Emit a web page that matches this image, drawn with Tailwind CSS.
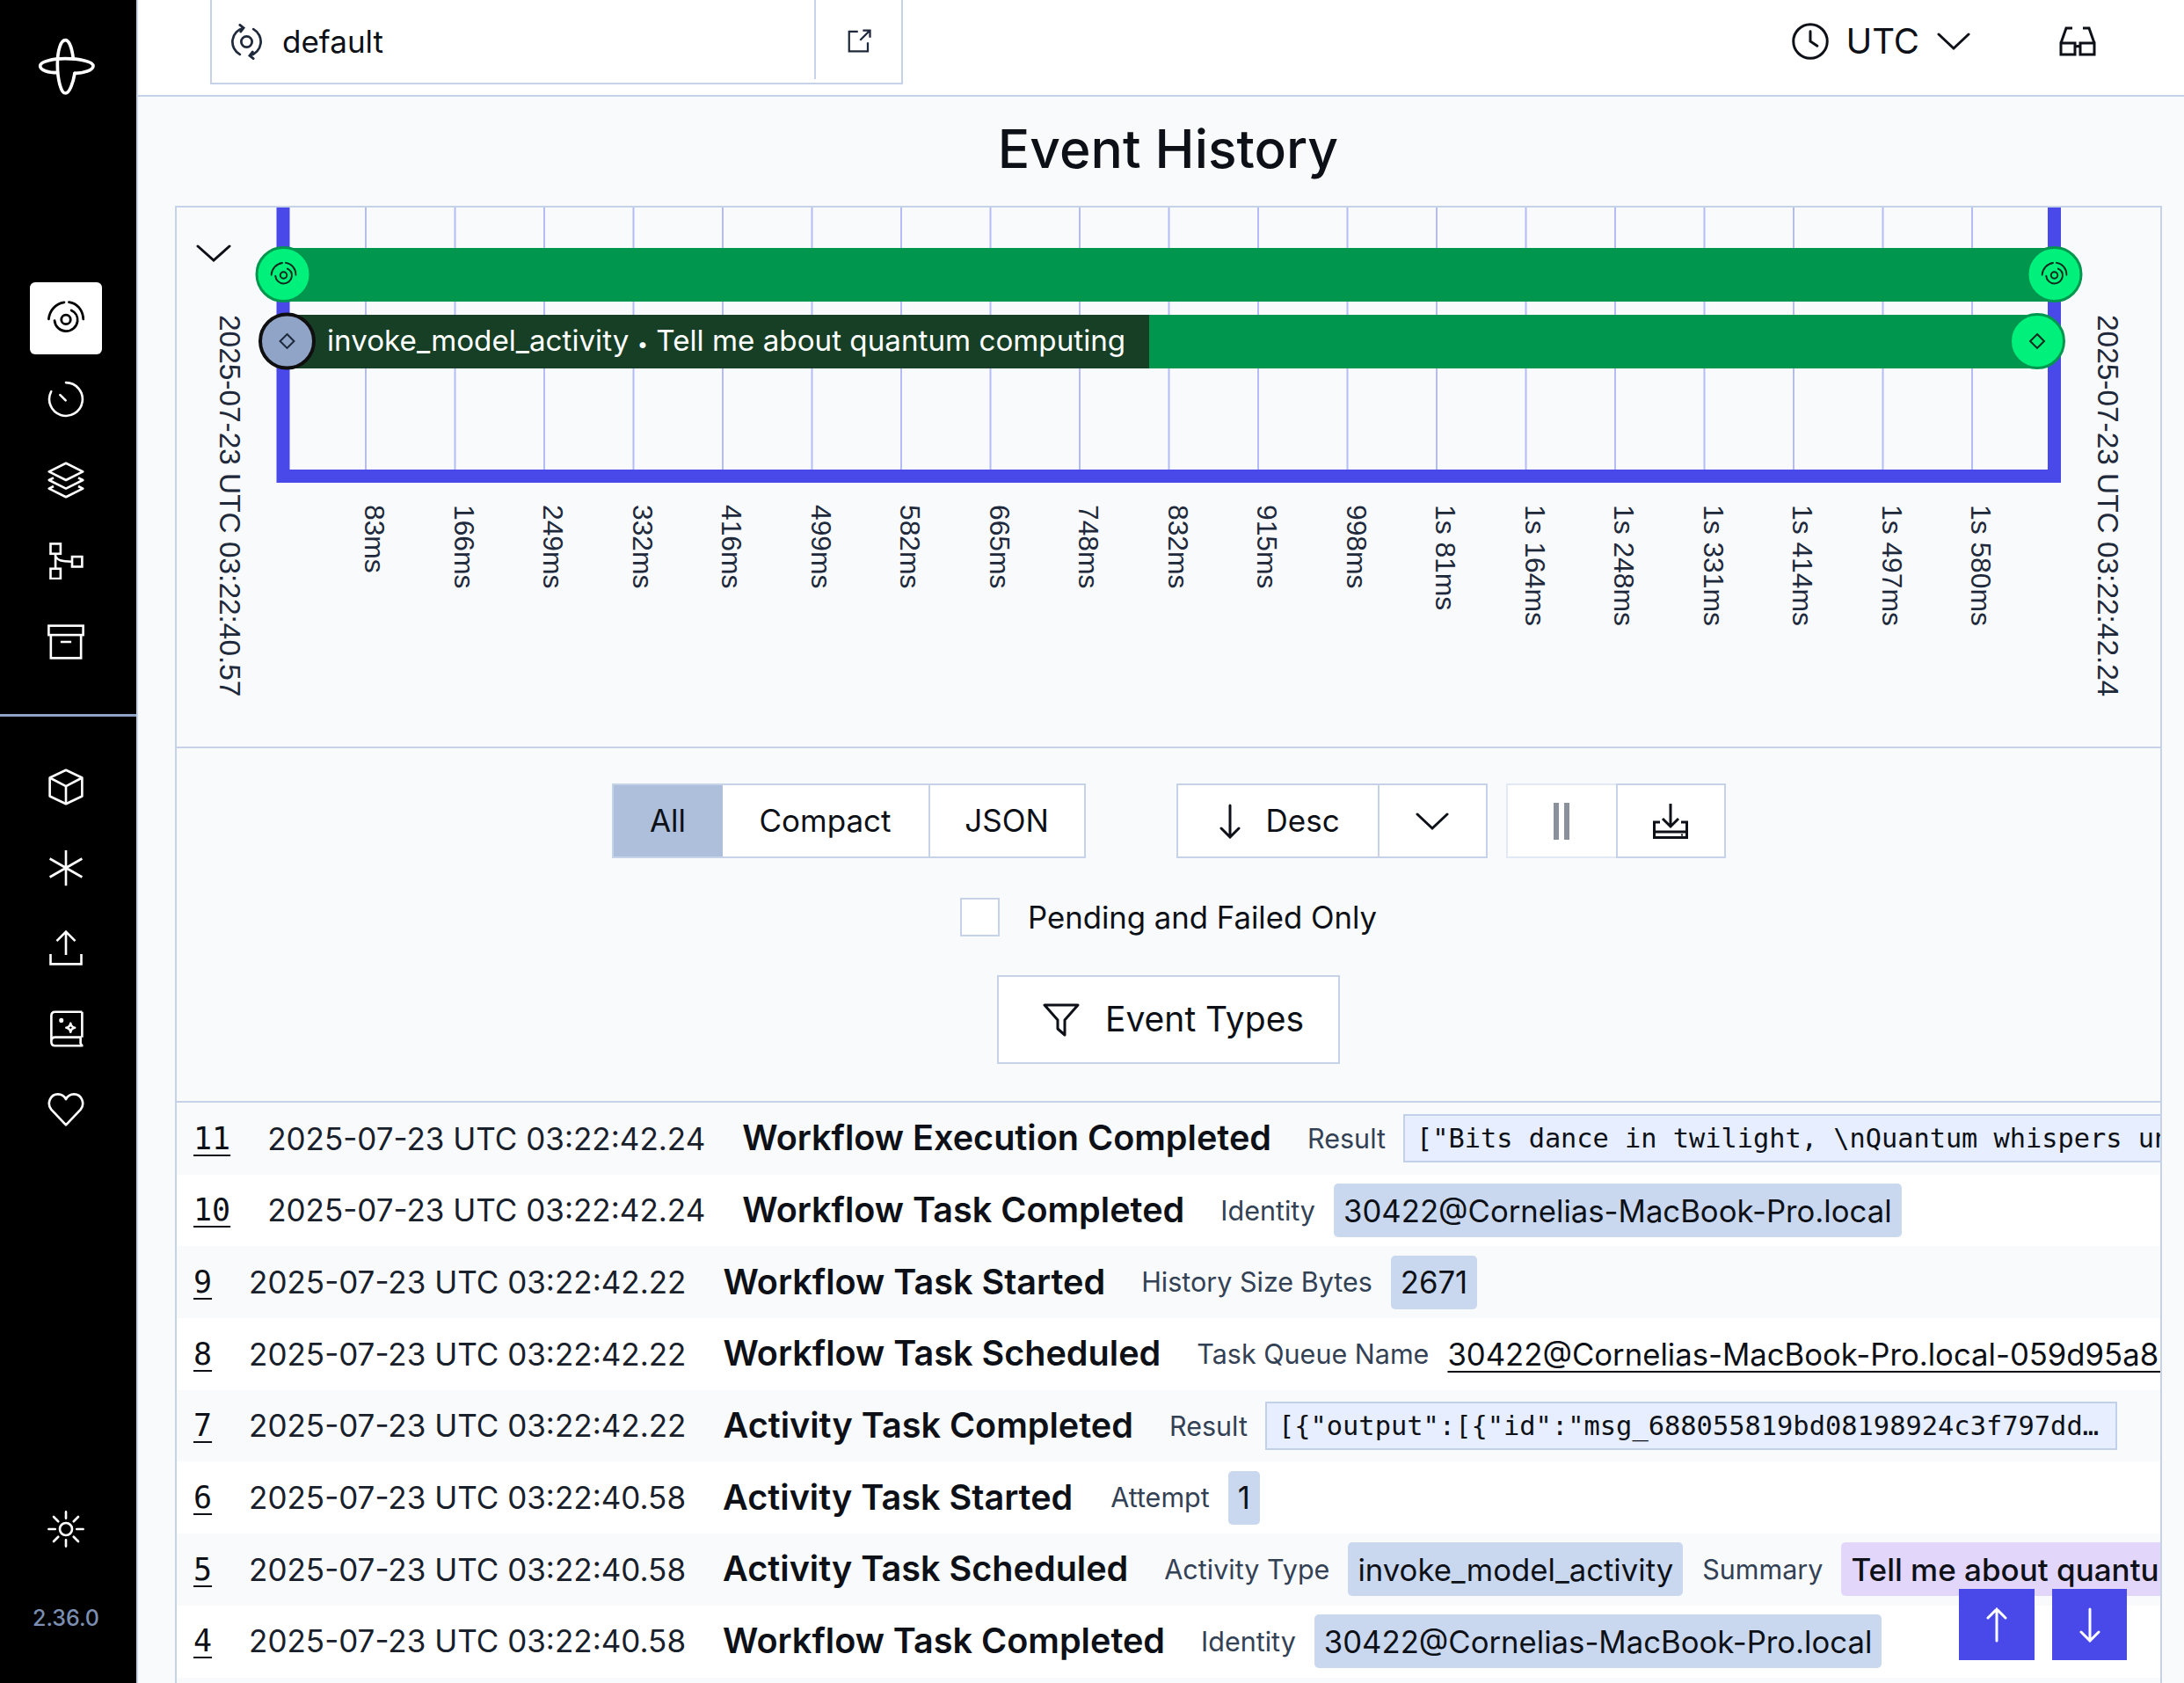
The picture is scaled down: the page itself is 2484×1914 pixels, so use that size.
<!DOCTYPE html>
<html lang="en">
<head>
<meta charset="UTF-8">
<title>Event History</title>
<script src="https://cdn.jsdelivr.net/npm/@tailwindcss/browser@4"></script>
</head>
<body class="w-[2484px] h-[1914px] overflow-hidden flex bg-[#f8fafc] text-[#0d1117] font-['Inter',sans-serif]">

<!-- icon sheet -->
<svg class="hidden">
  <symbol id="i-workflow" viewBox="0 0 24 24" fill="none" stroke="currentColor" stroke-width="1.600" stroke-linecap="round">
    <circle cx="12" cy="12.800" r="3"/>
    <path d="M4.600 13.500a7.500 7.500 0 0 0 14.900 .4c.3-3-1.300-5.800-4-7"/>
    <path d="M.8 12.500C1.300 7 5.300 2.400 10.800 1.600M14 1.500c5 .6 9 5 9.300 11"/>
  </symbol>
  <symbol id="i-diamond" viewBox="0 0 24 24" fill="none" stroke="currentColor" stroke-width="2.600" stroke-linejoin="miter">
    <path d="M12 2 22 12 12 22 2 12Z"/>
  </symbol>
</svg>

<!-- Sidebar -->
<aside class="w-[157px] h-full shrink-0 bg-black border-r-2 border-[#c5d2e8] flex flex-col items-center text-white">
  <svg class="mt-[30px] mr-[5px] w-[90px] h-[90px]" viewBox="0 0 270 270" fill="none" stroke="currentColor" stroke-width="11" stroke-linecap="round">
    <path d="M160 110C155 70 145 47 133 47 118 47 106 80 106 130 106 180 118 228 133 228 148 228 160 190 165 160"/>
    <path d="M106 158C75 158 47 150 47 135 47 120 90 110 133 110 180 110 228 120 228 135 228 150 195 160 165 160"/>
  </svg>

  <nav class="mt-[201px] mr-[5px] flex flex-col items-center gap-[10px]">
    <a class="w-[82px] h-[82px] rounded-md bg-white text-black flex items-center justify-center"><svg class="w-[42px] h-[42px]"><use href="#i-workflow"/></svg></a>
    <a class="w-[82px] h-[82px] flex items-center justify-center"><svg class="w-[42px] h-[42px]" viewBox="0 0 24 24" fill="none" stroke="currentColor" stroke-width="1.500" stroke-linecap="round"><path d="M12 1.200A10.800 10.800 0 1 1 2.400 7"/><path d="M8.200 9.200 11.800 12.800"/></svg></a>
    <a class="w-[82px] h-[82px] flex items-center justify-center"><svg class="w-[42px] h-[42px]" viewBox="0 0 24 24" fill="none" stroke="currentColor" stroke-width="1.500" stroke-linejoin="round"><path d="M12 1 23 6.500 12 12 1 6.500Z"/><path d="M4 10.500 1 12 12 17.500 23 12 20 10.500"/><path d="M4 16 1 17.500 12 23 23 17.500 20 16"/></svg></a>
    <a class="w-[82px] h-[82px] flex items-center justify-center"><svg class="w-[42px] h-[42px]" viewBox="0 0 24 24" fill="none" stroke="currentColor" stroke-width="1.500"><rect x="2" y=".8" width="6.500" height="6.500"/><rect x="2" y="17" width="6.500" height="6.500"/><rect x="16" y="9.200" width="6.500" height="6.500"/><path d="M5.200 7.300V17M5.200 9C6.500 11.500 8.500 12.400 16 12.400"/></svg></a>
    <a class="w-[82px] h-[82px] flex items-center justify-center"><svg class="w-[42px] h-[42px]" viewBox="0 0 24 24" fill="none" stroke="currentColor" stroke-width="1.500"><rect x=".8" y="1.500" width="22.400" height="6"/><path d="M2.200 7.500V22.500H21.800V7.500M8.500 12H15.500"/></svg></a>
  </nav>

  <div class="mt-[41px] w-full h-[3px] shrink-0 bg-[#8fa3c6]"></div>

  <nav class="mt-[39px] mr-[5px] flex flex-col items-center gap-[9.500px]">
    <a class="w-[82px] h-[82px] flex items-center justify-center"><svg class="w-[42px] h-[42px]" viewBox="0 0 24 24" fill="none" stroke="currentColor" stroke-width="1.500" stroke-linejoin="round"><path d="M12 1 22.500 6v12L12 23 1.500 18V6Z"/><path d="M1.500 6 12 11.500 22.500 6M12 11.500V23"/></svg></a>
    <a class="w-[82px] h-[82px] flex items-center justify-center"><svg class="w-[42px] h-[42px]" viewBox="0 0 24 24" fill="none" stroke="currentColor" stroke-width="1.500"><path d="M12 .5V23.500M1.500 6 22.500 18M22.500 6 1.500 18"/></svg></a>
    <a class="w-[82px] h-[82px] flex items-center justify-center"><svg class="w-[42px] h-[42px]" viewBox="0 0 24 24" fill="none" stroke="currentColor" stroke-width="1.500"><path d="M12 16.500V2M6 7.500 12 1.500 18 7.500M2 16V22.500H22V16"/></svg></a>
    <a class="w-[82px] h-[82px] flex items-center justify-center"><svg class="w-[42px] h-[42px]" viewBox="0 0 24 24" fill="none" stroke="currentColor" stroke-width="1.500" stroke-linejoin="round"><path d="M22.500 1H5C3.500 1 2.500 2 2.500 3.500V20.500C2.500 22 3.500 23 5 23H22.500L21.500 21.500V17.500H5C3.500 17.500 2.500 18.500 2.500 20M22.500 1V17.500"/><path d="M15 8.500c.3 1.800 1 2.500 2.800 2.800-1.800.3-2.500 1-2.800 2.800-.3-1.800-1-2.500-2.800-2.800 1.800-.3 2.500-1 2.800-2.800Z"/><circle cx="9" cy="6.500" r=".7"/></svg></a>
    <a class="w-[82px] h-[82px] flex items-center justify-center"><svg class="w-[42px] h-[42px]" viewBox="0 0 24 24" fill="none" stroke="currentColor" stroke-width="1.500" stroke-linejoin="round"><path d="M12 22.500 2.500 12.500C-.5 9 1.500 2.500 6.800 2.500 9 2.500 11 3.800 12 5.800 13 3.800 15 2.500 17.200 2.500 22.500 2.500 24.500 9 21.500 12.500Z"/></svg></a>
  </nav>

  <svg class="mt-auto mr-[5px] w-[42px] h-[42px]" viewBox="0 0 24 24" fill="none" stroke="currentColor" stroke-width="1.500" stroke-linecap="round"><circle cx="12" cy="12" r="4"/><path d="M12 .8V5M12 19V23.200M.8 12H5M19 12H23.200M4 4 7 7M17 17 20 20M20 4 17 7M7 17 4 20"/></svg>
  <span class="mt-[65px] mb-[59px] mr-[5px] text-[25px] leading-[30px] font-medium text-[#7b8fb2]">2.36.0</span>
</aside>

<main class="flex-1 min-w-0 h-full flex flex-col relative">
  <!-- Top bar -->
  <header class="h-[110px] shrink-0 bg-white border-b-2 border-[#c5d2e8] flex items-start">
    <div class="ml-[82px] w-[788px] h-[96px] border-x-2 border-b-2 border-[#c5d2e8] flex items-center">
      <svg class="ml-[19px] w-[41px] h-[41px] text-[#1e293b]" viewBox="0 0 24 24" fill="none" stroke="currentColor" stroke-width="1.600" stroke-linecap="round"><circle cx="12" cy="12" r="3.600"/><path d="M10 2.800A9.500 9.500 0 0 0 7.500 20.400M14 21.200A9.500 9.500 0 0 0 16.500 3.600M7.500 .8 10 2.800 8 5.300M16.500 23.200 14 21.200 16 18.700"/></svg>
      <span class="ml-[20px] text-[35px]">default</span>
      <div class="ml-auto w-[99px] h-[90px] self-start border-l-2 border-[#c5d2e8] flex items-center justify-center pt-[4px]">
        <svg class="w-[30px] h-[30px]" viewBox="0 0 24 24" fill="none" stroke="#1e293b" stroke-width="1.800"><path d="M11 3H3V21H20V13M13 11 22 2M15.500 2H22V8.500"/></svg>
      </div>
    </div>
    <div class="ml-auto mr-[100px] h-[94px] flex items-center">
      <svg class="w-[42px] h-[42px]" viewBox="0 0 24 24" fill="none" stroke="currentColor" stroke-width="1.700" stroke-linecap="round"><circle cx="12" cy="12" r="11"/><path d="M12 5.500V12L16.500 15"/></svg>
      <span class="ml-[19px] text-[40px]">UTC</span>
      <svg class="ml-[20px] w-[38px] h-[22px]" viewBox="0 0 38 22" fill="none" stroke="currentColor" stroke-width="3" stroke-linecap="round"><path d="M2 3 19 19 36 3"/></svg>
      <svg class="ml-[101px] w-[42px] h-[34px]" viewBox="0 0 42 34" fill="none" stroke="currentColor" stroke-width="3"><path d="M2 32V19L8 2H15M40 32V19L34 2H27M2 19H18V32H2ZM24 19H40V32H24ZM18 24C20 22 22 22 24 24"/></svg>
    </div>
  </header>

  <h1 class="h-[124px] shrink-0 flex items-center justify-center pl-[16px] pb-[6px] text-[60.500px] font-medium">Event History</h1>

  <div class="ml-[42px] mr-[25px] flex-1 min-h-0 border-x-2 border-t-2 border-[#c5d2e8] flex flex-col overflow-hidden">
    <!-- Timeline -->
    <section class="h-[613px] shrink-0">
      <svg class="block" width="2256" height="613" viewBox="201 236 2256 613" fill="none">
        <g stroke="#b5bbf7" stroke-width="2">
          <path d="M416 236V536M517.500 236V536M619 236V536M720.500 236V536M822 236V536M923.500 236V536M1025 236V536M1126.500 236V536M1228 236V536M1329.500 236V536M1431 236V536M1532.500 236V536M1634 236V536M1735.500 236V536M1837 236V536M1938.500 236V536M2040 236V536M2141.500 236V536M2243 236V536"/>
        </g>
        <path d="M322 236V541.500H2336.500V236" stroke="#4849e8" stroke-width="15"/>
        <path d="M225 280 243 296 261 280" stroke="#0d1117" stroke-width="3" stroke-linecap="round"/>
        <rect x="323" y="282" width="2013" height="61" fill="#00964e"/>
        <rect x="326" y="358" width="1991" height="61" fill="#00964e"/>
        <rect x="326" y="358" width="981" height="61" fill="#173f26"/>
        <circle cx="322.500" cy="312" r="30.500" fill="#00f07c" stroke="#00964e" stroke-width="3"/>
        <circle cx="2336.500" cy="312" r="30.500" fill="#00f07c" stroke="#00964e" stroke-width="3"/>
        <circle cx="326.500" cy="388" r="30.500" fill="#90a4c8" stroke="#0f0f0f" stroke-width="4"/>
        <circle cx="2317" cy="388" r="30.500" fill="#00f07c" stroke="#00964e" stroke-width="3"/>
        <use href="#i-workflow" x="307.500" y="297" width="30" height="30" class="text-[#0f2a1c]"/>
        <use href="#i-workflow" x="2321.500" y="297" width="30" height="30" class="text-[#0f2a1c]"/>
        <use href="#i-diamond" x="317" y="378.500" width="19" height="19" class="text-[#1e293b]"/>
        <use href="#i-diamond" x="2307.500" y="378.500" width="19" height="19" class="text-[#0f2a1c]"/>
        <text x="372" y="399" class="font-['Inter'] text-[33.200px] fill-white">invoke_model_activity <tspan class="text-[22px]">•</tspan> Tell me about quantum computing</text>
        <g class="font-['Liberation_Sans'] text-[31.800px] fill-[#1e293b]">
          <text class="text-[33.400px]" transform="translate(250 358) rotate(90)">2025-07-23 UTC 03:22:40.57</text>
          <text class="text-[33.400px]" transform="translate(2386 358) rotate(90)">2025-07-23 UTC 03:22:42.24</text>
          <text transform="translate(415 574) rotate(90)">83ms</text>
          <text transform="translate(516.500 574) rotate(90)">166ms</text>
          <text transform="translate(618 574) rotate(90)">249ms</text>
          <text transform="translate(719.500 574) rotate(90)">332ms</text>
          <text transform="translate(821 574) rotate(90)">416ms</text>
          <text transform="translate(922.500 574) rotate(90)">499ms</text>
          <text transform="translate(1024 574) rotate(90)">582ms</text>
          <text transform="translate(1125.500 574) rotate(90)">665ms</text>
          <text transform="translate(1227 574) rotate(90)">748ms</text>
          <text transform="translate(1328.500 574) rotate(90)">832ms</text>
          <text transform="translate(1430 574) rotate(90)">915ms</text>
          <text transform="translate(1531.500 574) rotate(90)">998ms</text>
          <text transform="translate(1633 574) rotate(90)">1s 81ms</text>
          <text transform="translate(1734.500 574) rotate(90)">1s 164ms</text>
          <text transform="translate(1836 574) rotate(90)">1s 248ms</text>
          <text transform="translate(1937.500 574) rotate(90)">1s 331ms</text>
          <text transform="translate(2039 574) rotate(90)">1s 414ms</text>
          <text transform="translate(2140.500 574) rotate(90)">1s 497ms</text>
          <text transform="translate(2242 574) rotate(90)">1s 580ms</text>
        </g>
      </svg>
    </section>

    <!-- Controls -->
    <section class="h-[403px] shrink-0 border-t-2 border-[#c5d2e8] pt-[40px] flex flex-col items-center text-[35px]">
      <div class="flex items-center">
        <div class="flex h-[85px] border-2 border-[#c5d2e8] bg-white">
          <button class="w-[124px] bg-[#aebfdc]">All</button>
          <button class="w-[234px]">Compact</button>
          <button class="w-[177px] border-l-2 border-[#c5d2e8]">JSON</button>
        </div>
        <div class="ml-[103px] flex h-[85px] border-2 border-[#c5d2e8] bg-white">
          <button class="w-[227px] flex items-center pl-[46px] gap-[28px]">
            <svg class="w-[26px] h-[40px]" viewBox="0 0 26 40" fill="none" stroke="currentColor" stroke-width="3" stroke-linecap="round"><path d="M13 2V38M3 28 13 38 23 28"/></svg>Desc
          </button>
          <button class="w-[123px] border-l-2 border-[#c5d2e8] flex items-center justify-center">
            <svg class="w-[38px] h-[22px]" viewBox="0 0 38 22" fill="none" stroke="currentColor" stroke-width="3" stroke-linecap="round"><path d="M2 3 19 19 36 3"/></svg>
          </button>
        </div>
        <div class="ml-[21px] flex h-[85px] bg-white">
          <button class="w-[125px] border-2 border-r-0 border-[#e2e9f4] flex items-center justify-center gap-[6px]">
            <span class="w-[6px] h-[42px] bg-[#8a919c]"></span><span class="w-[6px] h-[42px] bg-[#8a919c]"></span>
          </button>
          <button class="w-[125px] border-2 border-[#c5d2e8] flex items-center justify-center">
            <svg class="w-[42px] h-[42px]" viewBox="0 0 42 42" fill="none" stroke="currentColor" stroke-width="3"><path d="M21 1V27M12 18 21 27 30 18M9 22H2.500V39.500H39.500V22H33M4 33H38"/><path d="M33 36.500H35" stroke-width="2"/></svg>
          </button>
        </div>
      </div>

      <label class="mt-[45px] flex items-center h-[44px]">
        <span class="w-[45px] h-[44px] border-2 border-[#c5d2e8] bg-white"></span>
        <span class="ml-[32px] text-[34.700px]">Pending and Failed Only</span>
      </label>

      <button class="mt-[44px] w-[390px] h-[101px] border-2 border-[#c5d2e8] bg-white flex items-center pl-[50px] gap-[29px] text-[39px]">
        <svg class="w-[42px] h-[38px]" viewBox="0 0 42 38" fill="none" stroke="currentColor" stroke-width="3" stroke-linejoin="round"><path d="M2 2H40L25 19V36L17 29V19Z"/></svg>Event Types
      </button>
    </section>

    <!-- Event rows -->
    <section class="border-t-2 border-[#c5d2e8]">
      <div class="h-[81.700px] flex items-center overflow-hidden pl-[19px] whitespace-nowrap">
        <a class="font-['DejaVu_Sans_Mono'] text-[35px] underline decoration-2 underline-offset-[6px]">11</a>
        <span class="ml-[42px] text-[35px] text-[#18202c]">2025-07-23 UTC 03:22:42.24</span>
        <span class="ml-[42px] text-[39.600px] font-semibold">Workflow Execution Completed</span>
        <span class="ml-[41px] text-[30.500px] text-[#334155]">Result</span>
        <span class="ml-[20px] shrink-0 w-[1000px] h-[55px] flex items-center pl-[13px] bg-[#e6eeff] border-2 border-[#c3d0ea] font-['DejaVu_Sans_Mono'] text-[30.300px]">["Bits dance in twilight, \nQuantum whispers under</span>
      </div>
      <div class="h-[81.700px] flex items-center overflow-hidden pl-[19px] whitespace-nowrap bg-white">
        <a class="font-['DejaVu_Sans_Mono'] text-[35px] underline decoration-2 underline-offset-[6px]">10</a>
        <span class="ml-[42px] text-[35px] text-[#18202c]">2025-07-23 UTC 03:22:42.24</span>
        <span class="ml-[42px] text-[39.600px] font-semibold">Workflow Task Completed</span>
        <span class="ml-[41px] text-[30.500px] text-[#334155]">Identity</span>
        <span class="ml-[21px] shrink-0 h-[61px] flex items-center px-[11px] rounded-[5px] bg-[#c9d8ef] text-[34.700px]">30422@Cornelias-MacBook-Pro.local</span>
      </div>
      <div class="h-[81.700px] flex items-center overflow-hidden pl-[19px] whitespace-nowrap">
        <a class="font-['DejaVu_Sans_Mono'] text-[35px] underline decoration-2 underline-offset-[6px]">9</a>
        <span class="ml-[42px] text-[35px] text-[#18202c]">2025-07-23 UTC 03:22:42.22</span>
        <span class="ml-[42px] text-[39.600px] font-semibold">Workflow Task Started</span>
        <span class="ml-[41px] text-[30.500px] text-[#334155]">History Size Bytes</span>
        <span class="ml-[21px] shrink-0 h-[61px] flex items-center px-[11px] rounded-[5px] bg-[#c9d8ef] text-[34.700px]">2671</span>
      </div>
      <div class="h-[81.700px] flex items-center overflow-hidden pl-[19px] whitespace-nowrap bg-white">
        <a class="font-['DejaVu_Sans_Mono'] text-[35px] underline decoration-2 underline-offset-[6px]">8</a>
        <span class="ml-[42px] text-[35px] text-[#18202c]">2025-07-23 UTC 03:22:42.22</span>
        <span class="ml-[42px] text-[39.600px] font-semibold">Workflow Task Scheduled</span>
        <span class="ml-[41px] text-[30.500px] text-[#334155]">Task Queue Name</span>
        <a class="ml-[21px] shrink-0 text-[34.700px] underline decoration-2 underline-offset-[6px]">30422@Cornelias-MacBook-Pro.local-059d95a80c1f4b7e</a>
      </div>
      <div class="h-[81.700px] flex items-center overflow-hidden pl-[19px] whitespace-nowrap">
        <a class="font-['DejaVu_Sans_Mono'] text-[35px] underline decoration-2 underline-offset-[6px]">7</a>
        <span class="ml-[42px] text-[35px] text-[#18202c]">2025-07-23 UTC 03:22:42.22</span>
        <span class="ml-[42px] text-[39.600px] font-semibold">Activity Task Completed</span>
        <span class="ml-[41px] text-[30.500px] text-[#334155]">Result</span>
        <span class="ml-[20px] shrink-0 w-[969px] h-[55px] flex items-center px-[13px] bg-[#e6eeff] border-2 border-[#c3d0ea] font-['DejaVu_Sans_Mono'] text-[30.400px]"><span class="truncate">[{"output":[{"id":"msg_688055819bd08198924c3f797dd…</span></span>
      </div>
      <div class="h-[81.700px] flex items-center overflow-hidden pl-[19px] whitespace-nowrap bg-white">
        <a class="font-['DejaVu_Sans_Mono'] text-[35px] underline decoration-2 underline-offset-[6px]">6</a>
        <span class="ml-[42px] text-[35px] text-[#18202c]">2025-07-23 UTC 03:22:40.58</span>
        <span class="ml-[42px] text-[39.600px] font-semibold">Activity Task Started</span>
        <span class="ml-[43px] text-[30.500px] text-[#334155]">Attempt</span>
        <span class="ml-[21px] shrink-0 h-[61px] flex items-center px-[11px] rounded-[5px] bg-[#c9d8ef] text-[34.700px]">1</span>
      </div>
      <div class="h-[81.700px] flex items-center overflow-hidden pl-[19px] whitespace-nowrap">
        <a class="font-['DejaVu_Sans_Mono'] text-[35px] underline decoration-2 underline-offset-[6px]">5</a>
        <span class="ml-[42px] text-[35px] text-[#18202c]">2025-07-23 UTC 03:22:40.58</span>
        <span class="ml-[42px] text-[39.600px] font-semibold">Activity Task Scheduled</span>
        <span class="ml-[41px] text-[30.500px] text-[#334155]">Activity Type</span>
        <span class="ml-[21px] shrink-0 h-[61px] flex items-center px-[11px] rounded-[5px] bg-[#c9d8ef] text-[34.700px]">invoke_model_activity</span>
        <span class="ml-[22px] text-[30.500px] text-[#334155]">Summary</span>
        <span class="ml-[21px] shrink-0 h-[61px] flex items-center px-[11px] rounded-[5px] bg-[#e2d6fb] text-[35px] font-medium">Tell me about quantum computing</span>
      </div>
      <div class="h-[81.700px] flex items-center overflow-hidden pl-[19px] whitespace-nowrap bg-white">
        <a class="font-['DejaVu_Sans_Mono'] text-[35px] underline decoration-2 underline-offset-[6px]">4</a>
        <span class="ml-[42px] text-[35px] text-[#18202c]">2025-07-23 UTC 03:22:40.58</span>
        <span class="ml-[42px] text-[39.600px] font-semibold">Workflow Task Completed</span>
        <span class="ml-[41px] text-[30.500px] text-[#334155]">Identity</span>
        <span class="ml-[21px] shrink-0 h-[61px] flex items-center px-[11px] rounded-[5px] bg-[#c9d8ef] text-[34.700px]">30422@Cornelias-MacBook-Pro.local</span>
      </div>
    </section>
  </div>

  <!-- scroll buttons sit over the list -->
  <div class="absolute right-[65px] bottom-[26px] flex gap-[20px]">
    <button class="w-[86px] h-[81px] bg-[#4849e8] flex items-center justify-center">
      <svg class="w-[26px] h-[40px]" viewBox="0 0 26 40" fill="none" stroke="white" stroke-width="3" stroke-linecap="round"><path d="M13 38V2M3 12 13 2 23 12"/></svg>
    </button>
    <button class="w-[85px] h-[81px] bg-[#4849e8] flex items-center justify-center">
      <svg class="w-[26px] h-[40px]" viewBox="0 0 26 40" fill="none" stroke="white" stroke-width="3" stroke-linecap="round"><path d="M13 2V38M3 28 13 38 23 28"/></svg>
    </button>
  </div>
</main>
</body>
</html>
